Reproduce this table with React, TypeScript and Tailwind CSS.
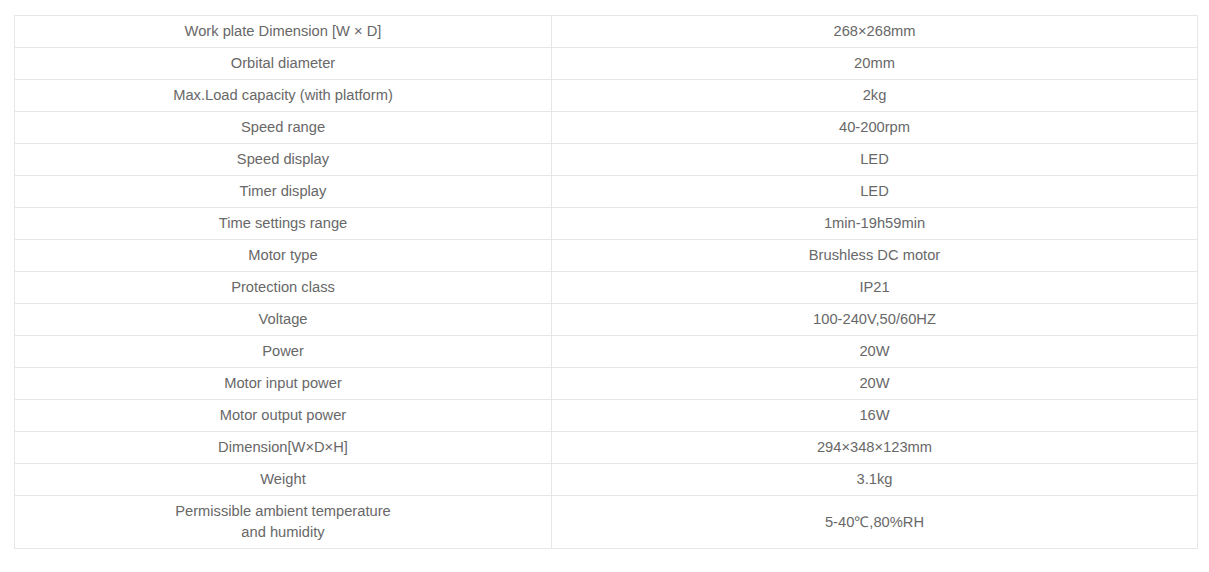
import React from "react";

const rows: [React.ReactNode, string][] = [
  ["Work plate Dimension [W × D]", "268×268mm"],
  ["Orbital diameter", "20mm"],
  ["Max.Load capacity (with platform)", "2kg"],
  ["Speed range", "40-200rpm"],
  ["Speed display", "LED"],
  ["Timer display", "LED"],
  ["Time settings range", "1min-19h59min"],
  ["Motor type", "Brushless DC motor"],
  ["Protection class", "IP21"],
  ["Voltage", "100-240V,50/60HZ"],
  ["Power", "20W"],
  ["Motor input power", "20W"],
  ["Motor output power", "16W"],
  ["Dimension[W×D×H]", "294×348×123mm"],
  ["Weight", "3.1kg"],
  [
    <>
      Permissible ambient temperature
      <br />
      and humidity
    </>,
    "5-40℃,80%RH",
  ],
];

export default function App() {
  return (
    <div
      className="bg-white min-h-[572px] pl-[14px] pt-[15px]"
      style={{ fontFamily: '"Liberation Sans", Arial, sans-serif' }}
    >
      <table className="w-[1184px] border-collapse table-fixed text-[14.7px] leading-[21px] text-[#686868]">
        <colgroup>
          <col className="w-[537px]" />
          <col />
        </colgroup>
        <tbody>
          {rows.map(([k, v], i) => (
            <tr key={i}>
              <td className="border border-[#e6e6e6] text-center py-[5px] px-2">{k}</td>
              <td className="border border-[#e6e6e6] text-center py-[5px] px-2">{v}</td>
            </tr>
          ))}
        </tbody>
      </table>
    </div>
  );
}
